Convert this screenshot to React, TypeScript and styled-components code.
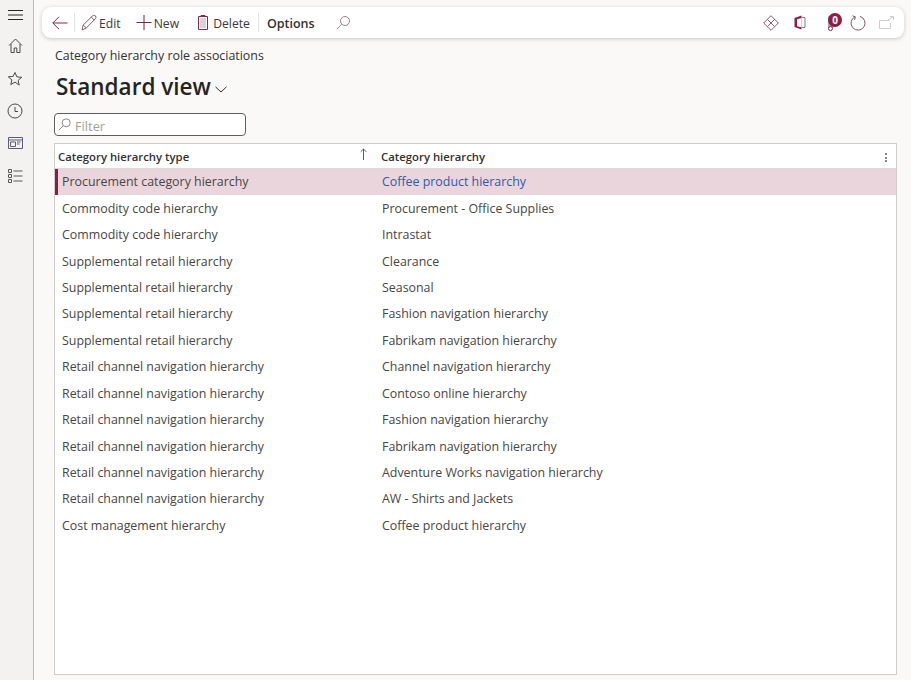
import React from "react";
import styled, { createGlobalStyle } from "styled-components";

const GlobalStyle = createGlobalStyle`
  html, body {
    margin: 0;
    height: 100%;
    overflow: hidden;
  }
  body {
    font-family: "Open Sans", "Noto Sans", sans-serif;
    background: #faf9f8;
    color: #323130;
  }
`;

const rows = [
  ["Procurement category hierarchy", "Coffee product hierarchy"],
  ["Commodity code hierarchy", "Procurement - Office Supplies"],
  ["Commodity code hierarchy", "Intrastat"],
  ["Supplemental retail hierarchy", "Clearance"],
  ["Supplemental retail hierarchy", "Seasonal"],
  ["Supplemental retail hierarchy", "Fashion navigation hierarchy"],
  ["Supplemental retail hierarchy", "Fabrikam navigation hierarchy"],
  ["Retail channel navigation hierarchy", "Channel navigation hierarchy"],
  ["Retail channel navigation hierarchy", "Contoso online hierarchy"],
  ["Retail channel navigation hierarchy", "Fashion navigation hierarchy"],
  ["Retail channel navigation hierarchy", "Fabrikam navigation hierarchy"],
  ["Retail channel navigation hierarchy", "Adventure Works navigation hierarchy"],
  ["Retail channel navigation hierarchy", "AW - Shirts and Jackets"],
  ["Cost management hierarchy", "Coffee product hierarchy"],
];

const Ico = ({ w = 16, h = 16, children }: { w?: number; h?: number; children: React.ReactNode }) => (
  <svg width={w} height={h} viewBox={`0 0 ${w} ${h}`} fill="none" strokeWidth="1">
    {children}
  </svg>
);

export default function App() {
  return (
    <>
      <GlobalStyle />
      <Shell>
        <Sidebar>
          <NavButton $h={26}>
            <Ico w={15} h={12}>
              <path d="M0 1.5h15M0 6h15M0 10.5h15" stroke="#252423" />
            </Ico>
          </NavButton>
          <NavButton $h={34}>
            <Ico w={15} h={15}>
              <path d="M1 7.5 7.5 1 14 7.5M3 6v8.5h3.2V10h2.6v4.5H12V6" stroke="#4a4846" />
            </Ico>
          </NavButton>
          <NavButton $h={33}>
            <Ico>
              <path d="M8 1.5l1.9 4.4 4.8.4-3.6 3.1 1.1 4.7L8 11.1l-4.2 2.5 1.1-4.7-3.6-3.1 4.8-.4z" stroke="#4a4846" />
            </Ico>
          </NavButton>
          <NavButton $h={32}>
            <Ico>
              <circle cx="8" cy="8" r="7" stroke="#4a4846" />
              <path d="M8 4v4.5h3" stroke="#4a4846" />
            </Ico>
          </NavButton>
          <NavButton $h={32}>
            <Ico w={15} h={12}>
              <path d="M.5.5h14v11H.5zM.5 3h14" stroke="#5c5a80" />
              <path d="M2.5 5h5v4.5h-5zM9 5h3.5M9 7h2.5" stroke="#605e5c" />
            </Ico>
          </NavButton>
          <NavButton $h={33}>
            <Ico w={15} h={14}>
              <path d="M.5.5h3v3h-3zM.5 5.5h3v3h-3zM.5 10.5h3v3h-3zM5.5 2h9M5.5 7h9M5.5 12h9" stroke="#5a5856" />
            </Ico>
          </NavButton>
        </Sidebar>
        <Main>
          <Toolbar>
            <BackButton>
              <Ico w={16} h={14}>
                <path d="M15.5 7H.8M7 .8.8 7 7 13.2" stroke="#7c2a4d" />
              </Ico>
            </BackButton>
            <Divider />
            <ActionButton $gap={2} $ml={6}>
              <Ico w={16} h={16}>
                <path d="M1 15 2.2 10.1 11.4 .9a1.9 1.9 0 0 1 3 2.8L5.3 13z" stroke="#8a5a70" />
                <path d="M2.2 10.1l3.1 2.9M10.2 2.1l3 2.9" stroke="#8a5a70" />
              </Ico>
              <ActionLabel>Edit</ActionLabel>
            </ActionButton>
            <ActionButton $gap={2} $ml={15}>
              <Ico w={16} h={16}>
                <path d="M8 0v15M.5 7.5h15" stroke="#7c1f4a" />
              </Ico>
              <ActionLabel>New</ActionLabel>
            </ActionButton>
            <ActionButton $gap={5} $ml={19}>
              <Ico w={10} h={15}>
                <path d="M.5 1.5h9v13h-9zM3 1.5V.5h4v1" stroke="#7c2a4d" />
                <path d="M2 3h6v10H2z" fill="#d8d4d2" />
              </Ico>
              <ActionLabel>Delete</ActionLabel>
            </ActionButton>
            <Divider $ml={8} />
            <OptionsLabel>Options</OptionsLabel>
            <SearchIcon>
              <Ico w={14} h={14}>
                <circle cx="9" cy="5" r="4.5" stroke="#9b7f88" />
                <path d="M5.8 8.2.8 13.2" stroke="#9b7f88" />
              </Ico>
            </SearchIcon>
            <ToolbarEnd>
              <Ico w={16} h={16}>
                <path d="M8 .7 15.3 8 8 15.3.7 8z" stroke="#8a5a70" />
                <path d="M4.4 4.4l7.2 7.2M11.6 4.4l-7.2 7.2" stroke="#8a5a70" />
              </Ico>
              <OfficeIcon>
                <Ico w={12} h={15}>
                  <path d="M.5 3 7.5.5v14L.5 12z" fill="#8c1d47" />
                  <path d="M3 4.3 7.5 3v9.2L3 11.2z" fill="#fff" />
                  <path d="M8 2.5h3v10H8" stroke="#8f7a82" />
                </Ico>
              </OfficeIcon>
              <BadgeWrap>
                <Ico w={10} h={17}>
                  <path d="M1 2.5 9 .5v12L1 15z" fill="#b8a4a4" />
                  <circle cx="3.5" cy="14.5" r="2" fill="#fff" stroke="#8c1d47" />
                </Ico>
                <Badge>0</Badge>
              </BadgeWrap>
              <RefreshIcon>
                <Ico w={16} h={16}>
                  <path d="M5 1.8A7 7 0 1 0 10 1.4" stroke="#7a5a66" />
                  <path d="M2.5.8 5.4 1.8 4.5 5" stroke="#7a5a66" />
                </Ico>
              </RefreshIcon>
              <OpenIcon>
                <Ico w={15} h={13}>
                  <path d="M10.5 4.5H.5v8h11V7M9 4l5-3.5M11 .5h3.5V4" stroke="#cfcdcb" />
                </Ico>
              </OpenIcon>
            </ToolbarEnd>
          </Toolbar>
          <Caption>Category hierarchy role associations</Caption>
          <ViewTitle>
            Standard view
            <svg width="12" height="7" viewBox="0 0 12 7" fill="none">
              <path d="M.5.8 6 6 11.5.8" stroke="#323130" />
            </svg>
          </ViewTitle>
          <FilterBox>
            <Ico w={13} h={13}>
              <circle cx="8.2" cy="4.8" r="4" stroke="#8a8886" />
              <path d="M5.2 7.8.8 12.2" stroke="#8a8886" />
            </Ico>
            <FilterHint>Filter</FilterHint>
          </FilterBox>
          <Grid>
            <HeaderRow>
              <HeaderCell>
                Category hierarchy type
                <SortArrow>
                  <svg width="7" height="12" viewBox="0 0 7 12" fill="none">
                    <path d="M3.5 12V1M.7 3.8 3.5 1l2.8 2.8" stroke="#605e5c" />
                  </svg>
                </SortArrow>
              </HeaderCell>
              <HeaderCell>Category hierarchy</HeaderCell>
              <MoreDots>
                <Dot />
                <Dot />
                <Dot />
              </MoreDots>
            </HeaderRow>
            {rows.map(([type, name], i) => (
              <Row key={i} $selected={i === 0}>
                <TypeCell>{type}</TypeCell>
                <NameCell $link={i === 0}>{name}</NameCell>
              </Row>
            ))}
          </Grid>
        </Main>
      </Shell>
    </>
  );
}

const Shell = styled.div`
  display: flex;
  width: 911px;
  height: 680px;
  overflow: hidden;
`;

const Sidebar = styled.nav`
  flex: none;
  box-sizing: border-box;
  width: 34px;
  height: 100%;
  padding: 2px 4px 0 0;
  background: #f3f2f0;
  border-right: 1px solid #bdbbb9;
`;

const NavButton = styled.div<{ $h: number }>`
  display: flex;
  align-items: center;
  justify-content: center;
  height: ${(p) => p.$h}px;
  padding-left: 1px;
`;

const Main = styled.main`
  flex: 1;
  min-width: 0;
  display: flex;
  flex-direction: column;
  padding: 7px 14px 5px 20px;
  background: #faf9f8;
`;

const Toolbar = styled.div`
  display: flex;
  align-items: center;
  flex: none;
  height: 31px;
  margin: 0 -7px 0 -12px;
  padding-left: 10px;
  padding-right: 10px;
  background: #fff;
  border-radius: 9px;
  box-shadow: 0 1px 4px rgba(0, 0, 0, 0.2);
  font-size: 12.2px;
`;

const BackButton = styled.div`
  display: flex;
  flex: none;
  margin-right: 6px;
`;

const Divider = styled.span<{ $ml?: number }>`
  flex: none;
  width: 1px;
  height: 19px;
  margin-left: ${(p) => p.$ml ?? 0}px;
  background: #e4e2e0;
`;

const ActionButton = styled.div<{ $gap: number; $ml: number }>`
  display: flex;
  align-items: center;
  gap: ${(p) => p.$gap}px;
  margin-left: ${(p) => p.$ml}px;
  color: #3b3a39;
  white-space: nowrap;
`;

const ActionLabel = styled.span`
  padding-top: 2px;
`;

const OptionsLabel = styled.span`
  margin-left: 8px;
  padding-top: 2px;
  font-size: 12.5px;
  font-weight: 600;
  color: #323130;
`;

const SearchIcon = styled.span`
  display: flex;
  margin-left: 21px;
`;

const ToolbarEnd = styled.div`
  display: flex;
  align-items: center;
  margin-left: auto;
`;

const OfficeIcon = styled.span`
  display: flex;
  margin-left: 15px;
`;

const BadgeWrap = styled.span`
  position: relative;
  display: flex;
  width: 16px;
  margin-left: 21px;
`;

const Badge = styled.span`
  position: absolute;
  top: -1px;
  left: 1px;
  width: 14px;
  height: 14px;
  border-radius: 50%;
  background: #8c1d47;
  color: #fff;
  font-size: 10px;
  font-weight: 700;
  line-height: 14px;
  text-align: center;
`;

const RefreshIcon = styled.span`
  display: flex;
  margin-left: 7px;
`;

const OpenIcon = styled.span`
  display: flex;
  margin-left: 13px;
`;

const Caption = styled.div`
  margin-top: 9px;
  margin-left: 1px;
  font-size: 12.4px;
  line-height: 17px;
  color: #323130;
`;

const ViewTitle = styled.div`
  display: flex;
  align-items: center;
  gap: 4px;
  height: 34px;
  margin-top: 5px;
  margin-left: 2px;
  font-size: 22.5px;
  font-weight: 600;
  color: #252423;

  svg {
    margin-top: 6px;
  }
`;

const FilterBox = styled.div`
  display: flex;
  align-items: center;
  gap: 4px;
  flex: none;
  box-sizing: border-box;
  width: 192px;
  height: 23px;
  margin-top: 10px;
  padding: 0 3px;
  background: #fff;
  border: 1px solid #605e5c;
  border-radius: 4px;
`;

const FilterHint = styled.span`
  padding-top: 3px;
  font-size: 12.8px;
  color: #a19f9d;
`;

const Grid = styled.div`
  flex: 1;
  min-height: 0;
  margin-top: 7px;
  background: #fff;
  border: 1px solid #cfcdcb;
`;

const HeaderRow = styled.div`
  position: relative;
  display: grid;
  grid-template-columns: 323px 1fr;
  align-items: center;
  box-sizing: border-box;
  height: 25px;
  border-bottom: 1px solid #dcdad8;
`;

const HeaderCell = styled.div`
  position: relative;
  padding-left: 3px;
  padding-top: 1px;
  font-size: 11.35px;
  font-weight: 600;
  color: #323130;
`;

const SortArrow = styled.span`
  position: absolute;
  right: 11px;
  top: 0;
  display: flex;
`;

const MoreDots = styled.div`
  position: absolute;
  right: 9px;
  top: 9px;
  display: flex;
  flex-direction: column;
  gap: 1.5px;
`;

const Dot = styled.span`
  width: 2px;
  height: 2px;
  border-radius: 50%;
  background: #605e5c;
`;

const Row = styled.div<{ $selected: boolean }>`
  display: grid;
  grid-template-columns: 320px 1fr;
  align-items: center;
  box-sizing: border-box;
  height: 26.45px;
  padding-bottom: 1px;
  font-size: 12.4px;
  color: #484644;
  background: ${(p) => (p.$selected ? "#ead5dc" : "transparent")};
  border-left: 3px solid ${(p) => (p.$selected ? "#8f1a48" : "transparent")};
`;

const TypeCell = styled.div`
  padding-left: 4px;
  white-space: nowrap;
`;

const NameCell = styled.div<{ $link: boolean }>`
  padding-left: 4px;
  white-space: nowrap;
  color: ${(p) => (p.$link ? "#2f5aa8" : "#484644")};
`;
